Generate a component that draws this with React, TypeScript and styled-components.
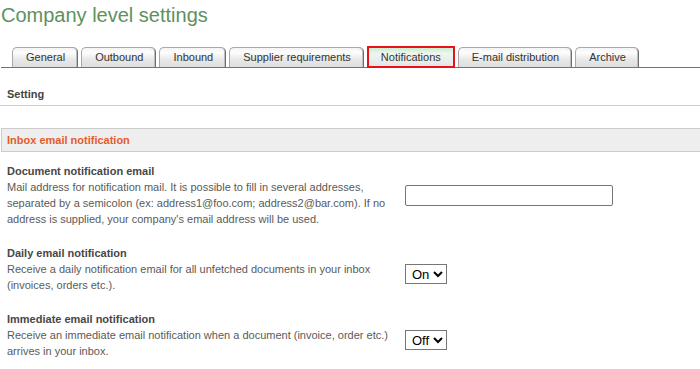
import { createGlobalStyle, styled } from 'styled-components'

const GlobalStyle = createGlobalStyle`
  body {
    margin: 0;
    background: #fff;
    font-family: "Liberation Sans", Arial, sans-serif;
  }
`;

const Page = styled.div`
  width: 700px;
  overflow: hidden;
`;

const Title = styled.h1`
  margin: 0;
  padding: 3px 0 0 1px;
  font-size: 20px;
  line-height: 24px;
  font-weight: normal;
  color: #5d9160;
`;

const TabBar = styled.div`
  display: flex;
  align-items: flex-end;
  gap: 3px;
  margin: 20px 0 0 1px;
  padding-left: 11px;
  height: 20px;
  border-bottom: 1px solid #4f8b52;
`;

const Tab = styled.div<{ $active?: boolean }>`
  box-sizing: border-box;
  height: ${p => (p.$active ? '22px' : '20px')};
  margin-bottom: ${p => (p.$active ? '-1px' : '0')};
  padding: ${p => (p.$active ? '0 12px' : '0 12px 0 13px')};
  font-size: 11px;
  line-height: ${p => (p.$active ? '18px' : '19px')};
  color: #333;
  white-space: nowrap;
  border: ${p => (p.$active ? '2px solid #e8121b' : '1px solid #a9a9a9')};
  border-bottom: ${p => (p.$active ? '2px solid #e8121b' : 'none')};
  border-right-color: ${p => (p.$active ? '#e8121b' : '#6f6f6f')};
  border-radius: ${p => (p.$active ? '0' : '5px 5px 0 0')};
  background: ${p =>
    p.$active
      ? 'linear-gradient(to bottom, #c9ecd0 0%, #eef6ef 30%, #e6e6e6 100%)'
      : 'linear-gradient(to bottom, #f4f4f4 0%, #fdfdfd 25%, #e8e8e8 60%, #dedede 100%)'};
  box-shadow: ${p => (p.$active ? 'none' : 'inset -1px 0 0 #bdbdbd')};
`;

const SettingHead = styled.div`
  padding: 20px 7px 4px;
  font-size: 11px;
  line-height: 13px;
  font-weight: bold;
  color: #444;
  border-bottom: 1px solid #cfcfcf;
`;

const SectionHead = styled.div`
  margin: 22px 0 0 1px;
  padding: 5px 5px 4px;
  font-size: 11px;
  line-height: 13px;
  font-weight: bold;
  color: #e35d2b;
  background: #eeeeee;
  border: 1px solid #cccccc;
  border-right: none;
`;

const List = styled.div`
  padding-top: 2px;
`;

const Row = styled.div`
  display: grid;
  grid-template-columns: 398px 1fr;
  column-gap: 7px;
  align-items: center;
  padding: 9px 0;
`;

const TextCell = styled.div`
  padding-left: 7px;
  font-size: 11px;
  line-height: 16px;
`;

const Label = styled.div`
  font-weight: bold;
  color: #474747;
`;

const Desc = styled.div`
  color: #5a5a5a;
`;

const ControlCell = styled.div<{ $shift?: number }>`
  margin-top: ${p => p.$shift ?? 0}px;
  display: flex;
`;

const TextInput = styled.input`
  box-sizing: border-box;
  width: 208px;
  height: 21px;
  border: 1px solid #767676;
  border-radius: 2px;
  padding: 1px 3px;
  font: 13px "Liberation Sans", Arial, sans-serif;
`;

const Select = styled.select`
  height: 20px;
  font: 13px "Liberation Sans", Arial, sans-serif;
  color: #000;
  border: 1px solid #767676;
  border-radius: 0;
  background: #fff;
  padding: 0 0 0 2px;
`;

const tabs = [
  'General',
  'Outbound',
  'Inbound',
  'Supplier requirements',
  'Notifications',
  'E-mail distribution',
  'Archive',
];

export default function App() {
  return (
    <Page>
      <GlobalStyle />
      <Title>Company level settings</Title>
      <TabBar>
        {tabs.map(t => (
          <Tab key={t} $active={t === 'Notifications'}>{t}</Tab>
        ))}
      </TabBar>
      <SettingHead>Setting</SettingHead>
      <SectionHead>Inbox email notification</SectionHead>
      <List>
        <Row>
          <TextCell>
            <Label>Document notification email</Label>
            <Desc>
              Mail address for notification mail. It is possible to fill in several addresses,
              separated by a semicolon (ex: address1@foo.com; address2@bar.com). If no address is
              supplied, your company's email address will be used.
            </Desc>
          </TextCell>
          <ControlCell>
            <TextInput type="text" />
          </ControlCell>
        </Row>
        <Row>
          <TextCell>
            <Label>Daily email notification</Label>
            <Desc>
              Receive a daily notification email for all unfetched documents in your inbox
              (invoices, orders etc.).
            </Desc>
          </TextCell>
          <ControlCell $shift={10}>
            <Select defaultValue="on">
              <option value="on">On</option>
              <option value="off">Off</option>
            </Select>
          </ControlCell>
        </Row>
        <Row>
          <TextCell>
            <Label>Immediate email notification</Label>
            <Desc>
              Receive an immediate email notification when a document (invoice, order etc.)
              arrives in your inbox.
            </Desc>
          </TextCell>
          <ControlCell $shift={10}>
            <Select defaultValue="off">
              <option value="on">On</option>
              <option value="off">Off</option>
            </Select>
          </ControlCell>
        </Row>
      </List>
    </Page>
  )
}
